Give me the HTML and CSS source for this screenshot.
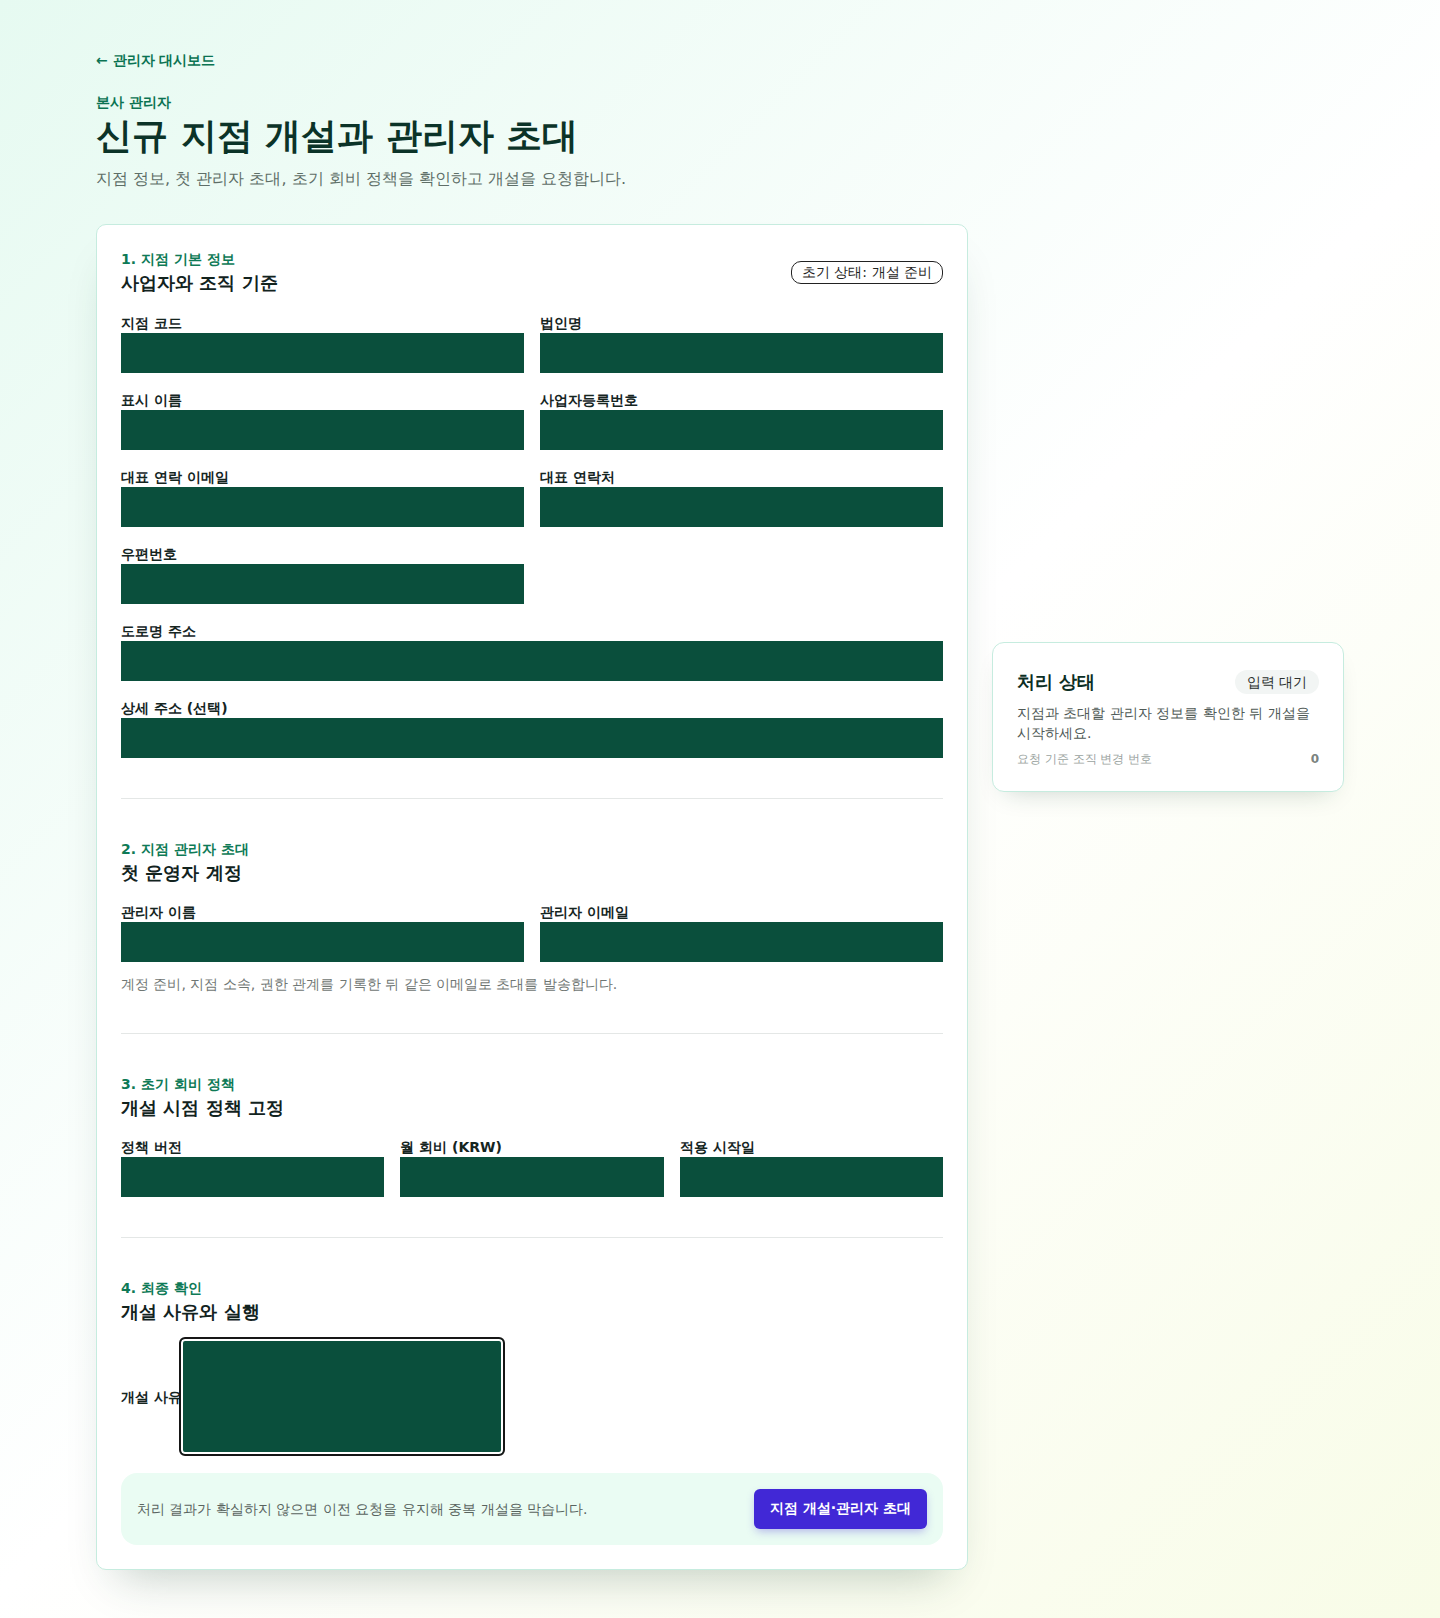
FILE: index.html
```html
<!DOCTYPE html>
<html>
<head>
<meta charset="utf-8">
<title>신규 지점 개설과 관리자 초대</title>
<link rel="stylesheet" href="styles.css">
</head>
<body>
<main class="page">
  <a class="back" href="#">← 관리자 대시보드</a>
  <p class="kicker">본사 관리자</p>
  <h1 class="page-title">신규 지점 개설과 관리자 초대</h1>
  <p class="lead">지점 정보, 첫 관리자 초대, 초기 회비 정책을 확인하고 개설을 요청합니다.</p>

  <div class="layout">
    <form class="form-card">
      <section class="sec">
        <div class="sec-head">
          <div>
            <p class="eyebrow">1. 지점 기본 정보</p>
            <h2 class="sec-title">사업자와 조직 기준</h2>
          </div>
          <span class="state-pill">초기 상태: 개설 준비</span>
        </div>
        <div class="grid2">
          <label class="field"><span class="label">지점 코드</span><input class="input" type="text"></label>
          <label class="field"><span class="label">법인명</span><input class="input" type="text"></label>
          <label class="field"><span class="label">표시 이름</span><input class="input" type="text"></label>
          <label class="field"><span class="label">사업자등록번호</span><input class="input" type="text"></label>
          <label class="field"><span class="label">대표 연락 이메일</span><input class="input" type="text"></label>
          <label class="field"><span class="label">대표 연락처</span><input class="input" type="text"></label>
          <label class="field"><span class="label">우편번호</span><input class="input" type="text"></label>
          <div></div>
          <label class="field full"><span class="label">도로명 주소</span><input class="input" type="text"></label>
          <label class="field full"><span class="label">상세 주소 (선택)</span><input class="input" type="text"></label>
        </div>
      </section>

      <section class="sec">
        <div class="sec-head">
          <div>
            <p class="eyebrow">2. 지점 관리자 초대</p>
            <h2 class="sec-title">첫 운영자 계정</h2>
          </div>
        </div>
        <div class="grid2">
          <label class="field"><span class="label">관리자 이름</span><input class="input" type="text"></label>
          <label class="field"><span class="label">관리자 이메일</span><input class="input" type="text"></label>
        </div>
        <p class="helper">계정 준비, 지점 소속, 권한 관계를 기록한 뒤 같은 이메일로 초대를 발송합니다.</p>
      </section>

      <section class="sec">
        <div class="sec-head">
          <div>
            <p class="eyebrow">3. 초기 회비 정책</p>
            <h2 class="sec-title">개설 시점 정책 고정</h2>
          </div>
        </div>
        <div class="grid3">
          <label class="field"><span class="label">정책 버전</span><input class="input" type="text"></label>
          <label class="field"><span class="label">월 회비 (KRW)</span><input class="input" type="text"></label>
          <label class="field"><span class="label">적용 시작일</span><input class="input" type="text"></label>
        </div>
      </section>

      <section class="sec last">
        <div class="sec-head tight">
          <div>
            <p class="eyebrow">4. 최종 확인</p>
            <h2 class="sec-title">개설 사유와 실행</h2>
          </div>
        </div>
        <label class="reason"><span class="label-inline">개설 사유</span><textarea class="reason-box"></textarea></label>
        <div class="submit-bar">
          <p class="submit-note">처리 결과가 확실하지 않으면 이전 요청을 유지해 중복 개설을 막습니다.</p>
          <button class="submit-btn" type="button">지점 개설·관리자 초대</button>
        </div>
      </section>
    </form>

    <aside class="aside">
      <div class="status-card">
        <div class="status-head">
          <h2 class="status-title">처리 상태</h2>
          <span class="tag">입력 대기</span>
        </div>
        <p class="status-desc">지점과 초대할 관리자 정보를 확인한 뒤 개설을 시작하세요.</p>
        <div class="meta"><span>요청 기준 조직 변경 번호</span><strong class="meta-val">0</strong></div>
      </div>
    </aside>
  </div>
</main>
</body>
</html>
```

FILE: styles.css
```css
* { box-sizing: border-box; }

html {
  background: linear-gradient(135deg, #e6faf1 0%, #ffffff 52%, #f8fce7 100%);
  min-height: 100%;
}

body {
  margin: 0;
  min-height: 100vh;
  font-family: "DejaVu Sans", sans-serif;
  color: #10231d;
}

.page {
  padding: 50px 96px 48px;
}

.back {
  display: inline-block;
  font-size: 14px;
  line-height: 21px;
  font-weight: 700;
  color: #0b7352;
  text-decoration: none;
}

.kicker {
  margin: 21px 0 0;
  font-size: 14px;
  line-height: 21px;
  font-weight: 700;
  color: #0b7352;
}

.page-title {
  margin: 1px 0 0;
  font-size: 36px;
  line-height: 44px;
  font-weight: 700;
  color: #0b3328;
}

.lead {
  margin: 9px 0 0;
  font-size: 16px;
  line-height: 24px;
  color: #5e6e67;
}

.layout {
  margin-top: 33px;
  display: grid;
  grid-template-columns: minmax(0, 1fr) 352px;
  gap: 24px;
  align-items: start;
}

.form-card {
  background: #ffffff;
  border: 1px solid #c6ecdf;
  border-radius: 10px;
  padding: 24px;
  box-shadow: 0 26px 44px -22px rgba(24, 64, 48, 0.28);
}

.sec {
  padding-bottom: 40px;
  border-bottom: 1px solid #e4e7e6;
}

.sec + .sec { padding-top: 40px; }

.sec.last {
  border-bottom: none;
  padding-bottom: 0;
}

.sec-head {
  display: flex;
  justify-content: space-between;
  align-items: center;
  margin-bottom: 17px;
}

.sec:first-child .sec-head { margin-bottom: 18px; }

.sec-head.tight { margin-bottom: 13px; }

.eyebrow {
  margin: 0;
  font-size: 14px;
  line-height: 20px;
  font-weight: 700;
  color: #0e7a56;
}

.sec-title {
  margin: 2px 0 0;
  font-size: 18px;
  line-height: 24px;
  font-weight: 700;
  color: #12231e;
}

.state-pill {
  display: inline-block;
  padding: 2px 10px;
  font-size: 14px;
  line-height: 17px;
  color: #1f2523;
  background: #ffffff;
  border: 1px solid #222;
  border-radius: 10px;
}

.grid2 {
  display: grid;
  grid-template-columns: 1fr 1fr;
  column-gap: 16px;
  row-gap: 17px;
}

.grid3 {
  display: grid;
  grid-template-columns: 1fr 1fr 1fr;
  column-gap: 16px;
  row-gap: 17px;
}

.full { grid-column: 1 / -1; }

.field { display: block; }

.label {
  display: block;
  font-size: 14px;
  line-height: 20px;
  font-weight: 700;
  color: #15251f;
}

.input {
  display: block;
  width: 100%;
  height: 40px;
  margin: 0;
  padding: 0;
  border: 0;
  border-radius: 0;
  background: #0a4f3c;
}

.helper {
  margin: 13px 0 0;
  font-size: 14px;
  line-height: 18px;
  color: #6f7673;
}

.reason {
  display: flex;
  align-items: center;
}

.label-inline {
  font-size: 14px;
  line-height: 20px;
  font-weight: 700;
  color: #15251f;
}

.reason-box {
  display: block;
  width: 326px;
  height: 119px;
  margin: 0 0 0 -3px;
  padding: 0;
  border: 2px solid #161616;
  border-radius: 6px;
  background: #0a4f3c;
  box-shadow: inset 0 0 0 2px #ffffff;
  resize: none;
}

.submit-bar {
  margin-top: 17px;
  display: flex;
  justify-content: space-between;
  align-items: center;
  padding: 16px;
  border-radius: 16px;
  background: #eafcf3;
}

.submit-note {
  margin: 0;
  font-size: 14px;
  line-height: 20px;
  color: #59645f;
}

.submit-btn {
  height: 40px;
  padding: 0 16px;
  border: 0;
  border-radius: 6px;
  background: #4128d6;
  color: #ffffff;
  font-family: inherit;
  font-size: 14px;
  font-weight: 700;
  box-shadow: 0 4px 10px -2px rgba(65, 40, 214, 0.35);
}

.aside { margin-top: 418px; }

.status-card {
  background: #ffffff;
  border: 1px solid #c6ecdf;
  border-radius: 12px;
  padding: 24px;
  box-shadow: 0 12px 24px -14px rgba(24, 64, 48, 0.25);
}

.status-head {
  display: flex;
  justify-content: space-between;
  align-items: center;
  height: 30px;
}

.status-title {
  margin: 0;
  font-size: 18px;
  line-height: 28px;
  font-weight: 700;
  color: #0b2e24;
}

.tag {
  display: inline-block;
  padding: 0 12px;
  font-size: 14px;
  line-height: 24px;
  color: #2b302e;
  background: #f2f5f4;
  border-radius: 999px;
}

.status-desc {
  margin: 6px 0 0;
  font-size: 14px;
  line-height: 20px;
  color: #4f5a56;
}

.meta {
  margin-top: 8px;
  display: flex;
  justify-content: space-between;
  font-size: 12px;
  line-height: 16px;
  color: #9aa3a0;
}

.meta-val {
  font-weight: 700;
  color: #7b8380;
}
```
